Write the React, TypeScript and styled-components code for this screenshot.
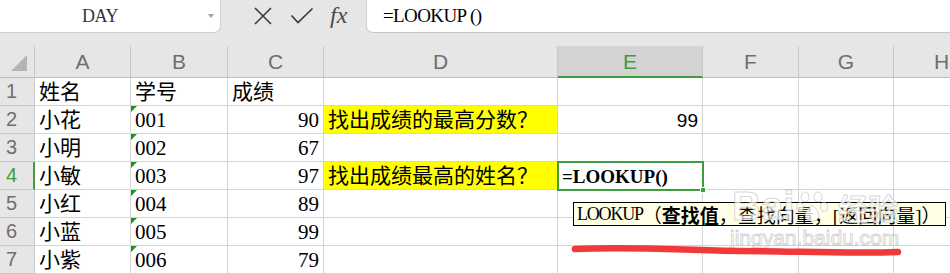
import React from "react";
import styled, { createGlobalStyle } from "styled-components";

const GlobalStyle = createGlobalStyle`
  html, body {
    margin: 0;
    padding: 0;
    background: #fff;
    overflow: hidden;
  }
  * { box-sizing: border-box; }
`;

const COLS = ["A", "B", "C", "D", "E", "F", "G", "H"];
const COL_WIDTHS = "35px 96px 97px 96px 234px 145px 96px 95px 96px";
const GREEN = "#3e9d3e";

type Row = {
  name: string;
  no: string;
  score: string;
  question?: string;
  answer?: string;
  formula?: boolean;
};

const rows: Row[] = [
  { name: "姓名", no: "学号", score: "成绩" },
  { name: "小花", no: "001", score: "90", question: "找出成绩的最高分数？", answer: "99" },
  { name: "小明", no: "002", score: "67" },
  { name: "小敏", no: "003", score: "97", question: "找出成绩最高的姓名？", formula: true },
  { name: "小红", no: "004", score: "89" },
  { name: "小蓝", no: "005", score: "99" },
  { name: "小紫", no: "006", score: "79" },
];

export default function App() {
  return (
    <Page>
      <GlobalStyle />
      <TopBar>
        <NameBox>
          <NameText>DAY</NameText>
          <DropArrow />
        </NameBox>
        <BarIcons>
          <svg width="20" height="20" viewBox="0 0 20 20">
            <path d="M2 2 L18 18 M18 2 L2 18" stroke="#3a3a3a" strokeWidth="1.6" fill="none" />
          </svg>
          <svg width="24" height="18" viewBox="0 0 24 18">
            <path d="M1.5 8.5 L8 15.5 L22.5 1.5" stroke="#3a3a3a" strokeWidth="1.7" fill="none" />
          </svg>
          <Fx>fx</Fx>
        </BarIcons>
        <FormulaInput>=LOOKUP ()</FormulaInput>
      </TopBar>

      <Sheet>
        <Corner>
          <svg width="16" height="16" viewBox="0 0 16 16">
            <polygon points="16,0 16,16 0,16" fill="#b4b4b4" />
          </svg>
        </Corner>
        {COLS.map((c) => (
          <ColHead key={c} $active={c === "E"}>
            {c}
          </ColHead>
        ))}

        {rows.map((r, i) => {
          const n = i + 1;
          return (
            <React.Fragment key={n}>
              <RowHead $active={n === 4}>{n}</RowHead>
              <Cell>{r.name}</Cell>
              <Cell $marker={n > 1}>{r.no}</Cell>
              <Cell $right={n > 1}>{r.score}</Cell>
              <Cell $fill={r.question ? "#ffff00" : undefined}>{r.question}</Cell>
              {r.formula ? (
                <SelectedCell>
                  =LOOKUP()
                  <FillHandle />
                </SelectedCell>
              ) : (
                <Cell $right $sans>
                  {r.answer}
                </Cell>
              )}
              <Cell />
              <Cell />
              <Cell />
            </React.Fragment>
          );
        })}
      </Sheet>

      <Tooltip>
        <TipName>LOOKUP</TipName>（<b>查找值</b>，查找向量，[返回向量]）
      </Tooltip>

      <Watermark>
        <WmBig>Bai</WmBig>
        <svg width="34" height="36" viewBox="0 0 34 36">
          <g fill="rgba(255,255,255,0.75)" stroke="rgba(150,150,150,0.4)" strokeWidth="1">
            <ellipse cx="9" cy="8" rx="4" ry="5" />
            <ellipse cx="22" cy="8" rx="4" ry="5" />
            <ellipse cx="4" cy="18" rx="3.5" ry="4.5" />
            <ellipse cx="28" cy="18" rx="3.5" ry="4.5" />
            <path d="M16 16 C 8 22, 6 32, 16 32 C 26 32, 24 22, 16 16 Z" />
          </g>
        </svg>
        <WmBig $cjk>经验</WmBig>
      </Watermark>
      <WmUrl>jingyan.baidu.com</WmUrl>

      <Scribble width="950" height="274" viewBox="0 0 950 274">
        <path
          d="M575 249 C 640 246, 690 251, 740 251 S 850 254, 898 252"
          stroke="#f03a3a"
          strokeWidth="6.5"
          strokeLinecap="round"
          fill="none"
        />
      </Scribble>
    </Page>
  );
}

/* ===== styled components ===== */

const Page = styled.div`
  position: relative;
  width: 950px;
  height: 274px;
  overflow: hidden;
  background: #e6e6e6;
  font-family: "Liberation Serif", "Noto Sans CJK SC", serif;
`;

const TopBar = styled.div`
  display: flex;
  height: 33px;
  margin-bottom: 13px;
`;

const NameBox = styled.div`
  position: relative;
  width: 221px;
  height: 33px;
  background: #fff;
  border-right: 1px solid #cfcfcf;
  border-bottom: 1px solid #cfcfcf;
  border-bottom-right-radius: 7px;
  display: flex;
  align-items: center;
  justify-content: center;
`;

const NameText = styled.span`
  font-family: "Liberation Serif", serif;
  font-size: 18px;
  color: #333;
  letter-spacing: -0.5px;
  margin-left: -20px;
`;

const DropArrow = styled.span`
  position: absolute;
  right: 6px;
  top: 14px;
  width: 0;
  height: 0;
  border-left: 3.5px solid transparent;
  border-right: 3.5px solid transparent;
  border-top: 4px solid #a0a0a0;
`;

const BarIcons = styled.div`
  width: 145px;
  display: flex;
  align-items: center;
  padding-left: 32px;
  gap: 17px;
  padding-bottom: 2px;
`;

const Fx = styled.span`
  font-family: "Liberation Serif", serif;
  font-style: italic;
  font-size: 24px;
  color: #4a4a4a;
  margin-left: -1px;
`;

const FormulaInput = styled.div`
  flex: 1;
  height: 33px;
  background: #fff;
  border-left: 1px solid #cfcfcf;
  border-bottom: 1px solid #c6c6c6;
  border-bottom-left-radius: 7px;
  display: flex;
  align-items: center;
  padding-left: 16px;
  font-size: 19px;
  letter-spacing: -0.6px;
  white-space: pre;
  color: #000;
`;

const Sheet = styled.div`
  display: grid;
  grid-template-columns: ${COL_WIDTHS};
  grid-template-rows: 32px repeat(7, 28px);
  background: #fff;
`;

const Corner = styled.div`
  background: #e6e6e6;
  border-right: 1px solid #c8c8c8;
  border-bottom: 1px solid #bdbdbd;
  display: flex;
  align-items: flex-end;
  justify-content: flex-end;
  padding: 0 7px 6px 0;
`;

const ColHead = styled.div<{ $active?: boolean }>`
  background: ${(p) => (p.$active ? "#d3d3d3" : "#e6e6e6")};
  border-right: 1px solid #c8c8c8;
  border-bottom: ${(p) => (p.$active ? `2px solid ${GREEN}` : "1px solid #bdbdbd")};
  display: flex;
  align-items: center;
  justify-content: center;
  font-family: "Liberation Sans", Arial, sans-serif;
  font-size: 21px;
  color: ${(p) => (p.$active ? GREEN : "#6e6e6e")};
  padding-top: ${(p) => (p.$active ? "1px" : "0")};
`;

const RowHead = styled.div<{ $active?: boolean }>`
  background: #e6e6e6;
  border-right: ${(p) => (p.$active ? `2px solid ${GREEN}` : "1px solid #c8c8c8")};
  border-bottom: 1px solid #c8c8c8;
  display: flex;
  align-items: center;
  padding-left: 6px;
  font-family: "Liberation Sans", Arial, sans-serif;
  font-size: 20px;
  color: ${(p) => (p.$active ? GREEN : "#6e6e6e")};
`;

const Cell = styled.div<{
  $right?: boolean;
  $fill?: string;
  $marker?: boolean;
  $sans?: boolean;
}>`
  position: relative;
  border-right: 1px solid #d4d4d4;
  border-bottom: 1px solid #d4d4d4;
  background: ${(p) => p.$fill ?? "#fff"};
  display: flex;
  align-items: center;
  justify-content: ${(p) => (p.$right ? "flex-end" : "flex-start")};
  padding: 2px 4px 0 4px;
  font-family: ${(p) =>
    p.$sans
      ? `"Liberation Sans", Arial, sans-serif`
      : `"Liberation Serif", "Noto Sans CJK SC", serif`};
  font-size: ${(p) => (p.$sans ? "19px" : "21px")};
  line-height: 1;
  color: #000;
  white-space: nowrap;

  &::before {
    content: "";
    display: ${(p) => (p.$marker ? "block" : "none")};
    position: absolute;
    left: 0;
    top: 0;
    width: 0;
    height: 0;
    border-top: 6px solid #1f8f1f;
    border-right: 6px solid transparent;
  }
`;

const SelectedCell = styled.div`
  position: relative;
  z-index: 2;
  background: #fff;
  outline: 2px solid ${GREEN};
  outline-offset: -1px;
  display: flex;
  align-items: center;
  padding: 2px 4px 0 4px;
  font-family: "Liberation Serif", serif;
  font-weight: 700;
  font-size: 19px;
  color: #000;
`;

const FillHandle = styled.span`
  position: absolute;
  right: -3px;
  bottom: -3px;
  width: 6px;
  height: 6px;
  background: ${GREEN};
  border: 1px solid #fff;
`;

const Tooltip = styled.div`
  position: absolute;
  left: 573px;
  top: 202px;
  width: 373px;
  height: 24px;
  z-index: 3;
  background: #ffffe6;
  border: 1px solid #000;
  display: flex;
  align-items: center;
  padding-left: 3px;
  font-family: "Liberation Serif", "Noto Sans CJK SC", serif;
  font-size: 19px;
  color: #000;
  white-space: nowrap;
  overflow: hidden;

  b {
    font-weight: 700;
  }
`;

const TipName = styled.span`
  font-size: 18px;
  letter-spacing: -1.2px;
`;

const Watermark = styled.div`
  position: absolute;
  left: 732px;
  top: 184px;
  z-index: 4;
  display: flex;
  align-items: center;
  gap: 2px;
  pointer-events: none;
`;

const WmBig = styled.span<{ $cjk?: boolean }>`
  font-family: ${(p) =>
    p.$cjk ? `"Noto Sans CJK SC", sans-serif` : `"Liberation Sans", Arial, sans-serif`};
  font-weight: 700;
  font-size: ${(p) => (p.$cjk ? "30px" : "40px")};
  color: rgba(255, 255, 255, 0.7);
  -webkit-text-stroke: 1px rgba(150, 150, 150, 0.4);
  margin-left: ${(p) => (p.$cjk ? "6px" : "0")};
`;

const WmUrl = styled.div`
  position: absolute;
  left: 730px;
  top: 226px;
  z-index: 4;
  font-family: "Liberation Sans", Arial, sans-serif;
  font-size: 21px;
  color: rgba(255, 255, 255, 0.7);
  -webkit-text-stroke: 1px rgba(170, 170, 170, 0.5);
  pointer-events: none;
`;

const Scribble = styled.svg`
  position: absolute;
  left: 0;
  top: 0;
  z-index: 5;
  pointer-events: none;
`;
